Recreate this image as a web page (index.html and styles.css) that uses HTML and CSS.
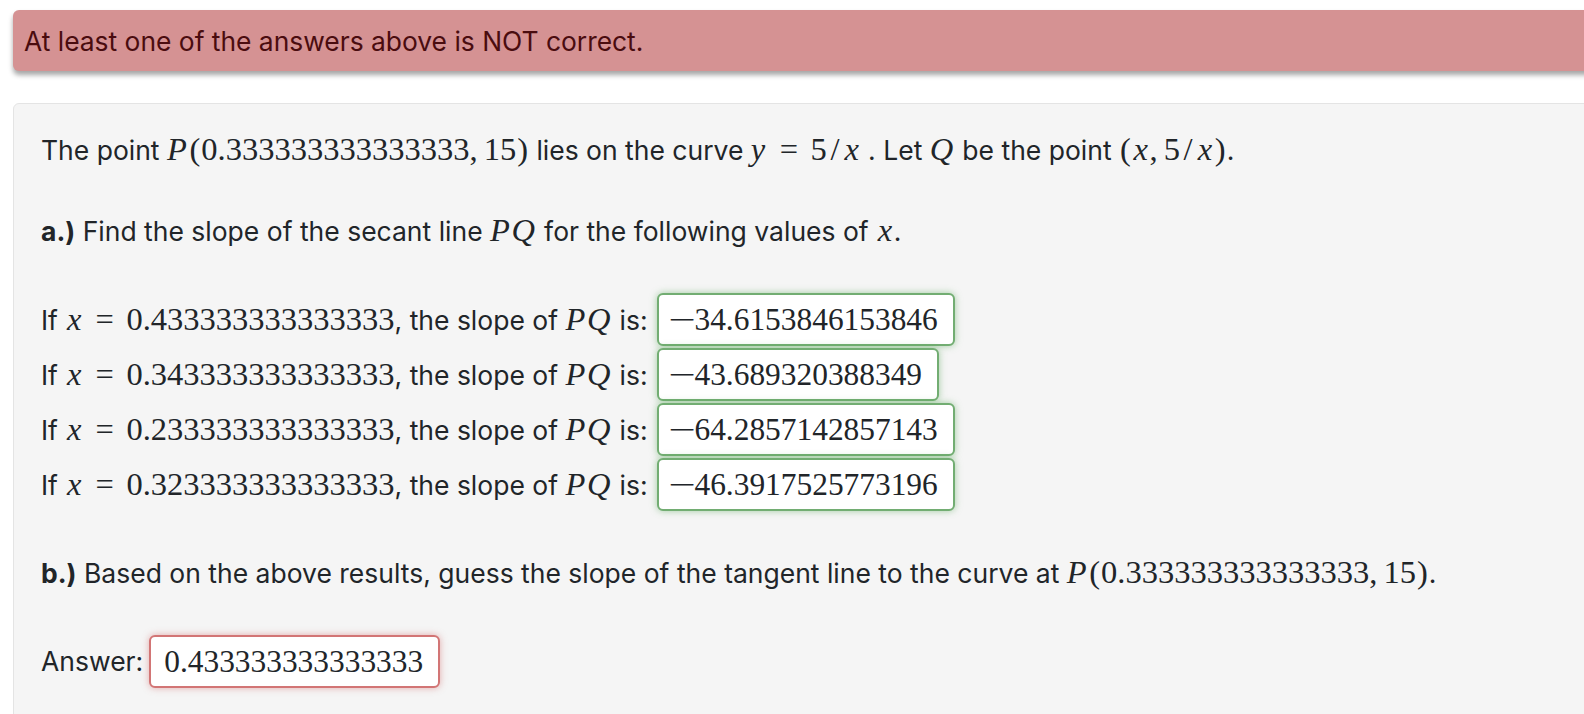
FILE: index.html
```html
<!DOCTYPE html>
<html lang="en">
<head>
<meta charset="utf-8">
<title>Secant slopes</title>
<link rel="stylesheet" href="styles.css">
</head>
<body>
<div class="page">
  <div class="alert">At least one of the answers above is NOT correct.</div>
  <div class="card">
    <p class="line">The point <span class="m"><i class="ip">P</i><span class="pa">(</span>0.333333333333333<span class="pc">,</span>15<span class="pa">)</span></span> lies on the curve <span class="m"><i class="iy">y</i><span class="rel">=</span>5<span class="sl">/</span><i class="ix">x</i></span> . Let <span class="m"><i class="iq">Q</i></span> be the point <span class="m"><span class="pa">(</span><i class="ix">x</i><span class="pc">,</span>5<span class="sl">/</span><i class="ix">x</i><span class="pa">)</span></span>.</p>
    <p class="line la"><b>a.)</b> Find the slope of the secant line <span class="m"><i class="ip">P</i><i class="iq">Q</i></span> for the following values of <span class="m"><i class="ix">x</i></span>.</p>
    <div class="rows">
      <div class="row"><span>If <span class="m"><i class="ix">x</i><span class="rel">=</span>0.433333333333333</span>, the slope of <span class="m"><i class="ip">P</i><i class="iq">Q</i></span> is:</span><span class="ans ok"><span class="neg">−</span>34.6153846153846</span></div>
      <div class="row"><span>If <span class="m"><i class="ix">x</i><span class="rel">=</span>0.343333333333333</span>, the slope of <span class="m"><i class="ip">P</i><i class="iq">Q</i></span> is:</span><span class="ans ok"><span class="neg">−</span>43.689320388349</span></div>
      <div class="row"><span>If <span class="m"><i class="ix">x</i><span class="rel">=</span>0.233333333333333</span>, the slope of <span class="m"><i class="ip">P</i><i class="iq">Q</i></span> is:</span><span class="ans ok"><span class="neg">−</span>64.2857142857143</span></div>
      <div class="row"><span>If <span class="m"><i class="ix">x</i><span class="rel">=</span>0.323333333333333</span>, the slope of <span class="m"><i class="ip">P</i><i class="iq">Q</i></span> is:</span><span class="ans ok"><span class="neg">−</span>46.3917525773196</span></div>
    </div>
    <p class="line"><b>b.)</b> Based on the above results, guess the slope of the tangent line to the curve at <span class="m"><i class="ip">P</i><span class="pa">(</span>0.333333333333333<span class="pc">,</span>15<span class="pa">)</span></span>.</p>
    <div class="row answer"><span>Answer:</span><span class="ans bad">0.433333333333333</span></div>
  </div>
</div>
</body>
</html>
```

FILE: styles.css
```css
* { box-sizing: border-box; }
html, body { margin: 0; padding: 0; }
body {
  background: #ffffff;
  font-family: Inter, "Noto Sans", sans-serif;
  color: #212529;
}
.page {
  width: 1584px;
  height: 714px;
  overflow: hidden;
}
.alert {
  margin: 10px -30px 0 13px;
  height: 61px;
  background: #d59293;
  color: #4a0c0f;
  border-radius: 6px;
  box-shadow: 0 4px 5px rgba(0, 0, 0, 0.35);
  display: flex;
  align-items: center;
  padding-left: 11px;
  font-size: 26.4px;
}
.card {
  margin: 32px -30px 0 13px;
  background: #f5f5f5;
  border: 1px solid #e4e4e4;
  border-radius: 6px;
  padding: 28px 0 60px 27px;
  font-size: 26.5px;
  line-height: 35px;
}
.line { margin: 0 0 45px 0; white-space: nowrap; }
.la { margin-bottom: 43px; }
.line b { font-weight: 700; }
.m {
  font-family: "Liberation Serif", "Times New Roman", serif;
  font-size: 32.5px;
}
.m i { font-style: italic; }
.ip { margin-right: 0.05em; }
.iq { margin-right: 0.05em; }
.iy { margin-right: 0.06em; }
.ix { padding: 0 0.05em; }
.pa { padding: 0 0.03em; }
.sl { padding: 0 0.11em; }
.rel { margin: 0 0.385em; }
.pc { margin-right: 0.19em; }
.rows { margin-bottom: 43px; }
.row {
  display: flex;
  align-items: center;
  height: 55px;
  white-space: pre;
}
.answer { margin-top: -2px; }
.ans {
  display: inline-flex;
  align-items: center;
  height: 53px;
  margin-left: 9px;
  padding: 0 15px 0 11.5px;
  background: #ffffff;
  border-radius: 6px;
  font-family: "Liberation Serif", "Times New Roman", serif;
  font-size: 31.4px;
  color: #212529;
}
.ok {
  border: 2px solid #72ad72;
  box-shadow: 0 0 7px rgba(92, 170, 92, 0.55);
}
.bad {
  margin-left: 6px;
  border: 2px solid #d27575;
  box-shadow: 0 0 7px rgba(210, 100, 100, 0.5);
  padding-left: 13px;
}
.neg {
  display: inline-block;
  width: 0.778em;
  text-align: center;
  transform: scaleX(1.55);
}
```
